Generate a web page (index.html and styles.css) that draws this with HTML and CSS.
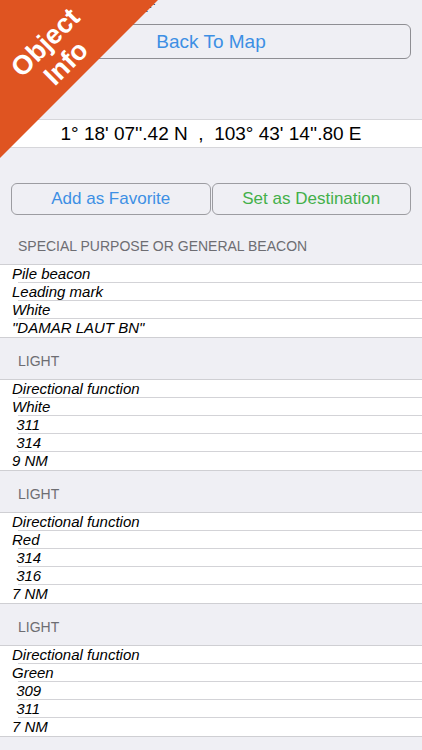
FILE: index.html
```html
<!DOCTYPE html>
<html lang="en">
<head>
<meta charset="UTF-8">
<meta name="viewport" content="width=device-width, initial-scale=1.0">
<title>Object Info</title>
<link rel="stylesheet" href="styles.css">
</head>
<body>

<div class="corner">
<div class="corner-text">Object<br>Info</div>
</div>
<span class="dots">⋰</span>

<div class="top">
<button class="btn back">Back To Map</button>
</div>

<div class="coords">1° 18' 07''.42 N&nbsp; ,&nbsp; 103° 43' 14''.80 E</div>

<div class="actions">
<button class="btn fav">Add as Favorite</button>
<button class="btn dest">Set as Destination</button>
</div>

<div class="group first">
<div class="group-title">SPECIAL PURPOSE OR GENERAL BEACON</div>
<ul class="rows">
<li>Pile beacon</li>
<li>Leading mark</li>
<li>White</li>
<li>"DAMAR LAUT BN"</li>
</ul>
</div>

<div class="group">
<div class="group-title">LIGHT</div>
<ul class="rows">
<li>Directional function</li>
<li>White</li>
<li>&nbsp;311</li>
<li>&nbsp;314</li>
<li>9 NM</li>
</ul>
</div>

<div class="group">
<div class="group-title">LIGHT</div>
<ul class="rows">
<li>Directional function</li>
<li>Red</li>
<li>&nbsp;314</li>
<li>&nbsp;316</li>
<li>7 NM</li>
</ul>
</div>

<div class="group">
<div class="group-title">LIGHT</div>
<ul class="rows">
<li>Directional function</li>
<li>Green</li>
<li>&nbsp;309</li>
<li>&nbsp;311</li>
<li>7 NM</li>
</ul>
</div>

</body>
</html>
```

FILE: styles.css
```css
*{box-sizing:border-box}
body{margin:0;font-family:"Liberation Sans",Arial,sans-serif;background:#efeff4;color:#000;position:relative}

.corner{position:absolute;top:0;left:0;width:158px;height:158px;background:#df5421;
clip-path:polygon(0 0,100% 0,0 100%);z-index:2}
.corner-text{position:absolute;left:56px;top:53px;transform:translate(-50%,-50%) rotate(-45deg);
color:#fff;font-weight:bold;font-size:27px;line-height:29px;text-align:center;white-space:nowrap}
.dots{position:absolute;left:145px;top:2px;font-size:11px;color:#222}

.btn{font-family:inherit;background:transparent;border:1px solid #9c9ca1;border-radius:6px;cursor:pointer;padding:0}

.top{padding:24px 11px 0}
.back{width:100%;height:35px;font-size:19px;color:#3d8fe4;border-color:#8e8e93}

.coords{margin-top:60px;height:29px;background:#fff;border-top:1px solid #d6d6da;border-bottom:1px solid #d6d6da;
text-align:center;font-size:19px;line-height:27px}

.actions{margin-top:35px;padding:0 11px;display:grid;grid-template-columns:1fr 1fr;gap:1px}
.actions .btn{height:32px;font-size:17px}
.fav{color:#3d8fe4}
.dest{color:#43b04a}

.group.first{margin-top:8px}
.group-title{height:41px;padding:15px 0 0 18px;font-size:14px;line-height:17px;color:#6d6d72}

.rows{list-style:none;margin:0;padding:0;background:#fff;border-top:1px solid #cfcfd3;border-bottom:1px solid #cfcfd3}
.rows li{height:18px;padding-left:12px;font-size:15px;font-style:italic;line-height:17px;
background:linear-gradient(#d3d3d7,#d3d3d7) 18px 100%/100% 1px no-repeat}
.rows li:last-child{background:none}
```
